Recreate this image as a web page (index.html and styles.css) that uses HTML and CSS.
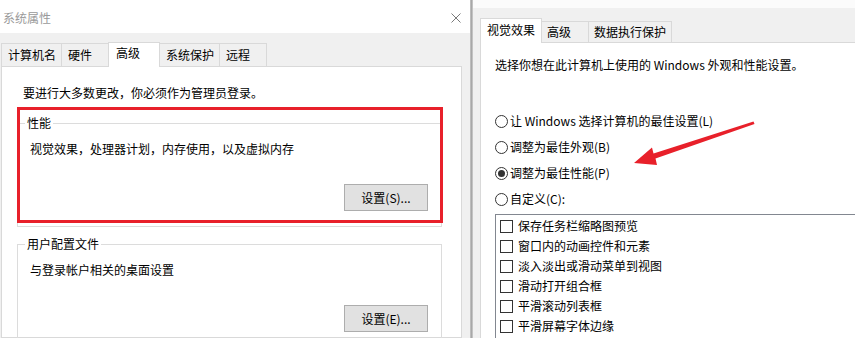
FILE: index.html
```html
<!DOCTYPE html>
<html lang="zh-CN">
<head>
<meta charset="utf-8">
<title>系统属性</title>
<link rel="stylesheet" href="styles.css">
</head>
<body>
<div class="screen">
  <section class="win win-left">
    <div class="strip"></div>
    <header class="titlebar">
      <span class="title">系统属性</span>
      <svg class="close" width="10" height="10" viewBox="0 0 10 10"><path d="M0.5 0.5 L9.5 9.5 M9.5 0.5 L0.5 9.5" stroke="#7a7a7a" stroke-width="1" fill="none"/></svg>
    </header>
    <div class="body">
      <nav class="tabs">
        <span class="tab">计算机名</span>
        <span class="tab">硬件</span>
        <span class="tab active">高级</span>
        <span class="tab">系统保护</span>
        <span class="tab">远程</span>
      </nav>
      <div class="panel">
        <p class="note">要进行大多数更改，你必须作为管理员登录。</p>
        <fieldset class="group">
          <legend>性能</legend>
          <p>视觉效果，处理器计划，内存使用，以及虚拟内存</p>
          <div class="actions"><button class="btn">设置(S)...</button></div>
        </fieldset>
        <fieldset class="group group-profile">
          <legend>用户配置文件</legend>
          <p>与登录帐户相关的桌面设置</p>
          <div class="actions"><button class="btn">设置(E)...</button></div>
        </fieldset>
        <div class="highlight"></div>
      </div>
    </div>
  </section>
  <div class="divider"></div>
  <section class="win win-right">
    <div class="strip-right"></div>
    <div class="body-right">
      <nav class="tabs tabs-right">
        <span class="tab active">视觉效果</span>
        <span class="tab">高级</span>
        <span class="tab">数据执行保护</span>
      </nav>
      <div class="panel panel-right">
        <p class="intro">选择你想在此计算机上使用的 Windows 外观和性能设置。</p>
        <div class="radios">
          <label class="radio"><span class="dot"></span>让 Windows 选择计算机的最佳设置(L)</label>
          <label class="radio"><span class="dot"></span>调整为最佳外观(B)</label>
          <label class="radio checked"><span class="dot"></span>调整为最佳性能(P)</label>
          <label class="radio"><span class="dot"></span>自定义(C):</label>
        </div>
        <ul class="checklist">
          <li><span class="box"></span>保存任务栏缩略图预览</li>
          <li><span class="box"></span>窗口内的动画控件和元素</li>
          <li><span class="box"></span>淡入淡出或滑动菜单到视图</li>
          <li><span class="box"></span>滑动打开组合框</li>
          <li><span class="box"></span>平滑滚动列表框</li>
          <li><span class="box"></span>平滑屏幕字体边缘</li>
        </ul>
      </div>
    </div>
  </section>
  <svg class="arrow" width="855" height="338" viewBox="0 0 855 338">
    <polygon points="634,163 657,165 655.5,158.5 754.5,124 753.5,121.5 653.5,153.5 652,147.5" fill="#e8202a"/>
  </svg>
</div>
</body>
</html>
```
FILE: styles.css
```css
* {
  box-sizing: border-box;
  margin: 0;
  padding: 0;
}

html, body {
  width: 855px;
  height: 338px;
  overflow: hidden;
  background: #fff;
}

body {
  font-family: "Noto Sans CJK SC", "Noto Sans", sans-serif;
  font-size: 12px;
  line-height: 16px;
  color: #000;
}

.screen {
  position: relative;
  display: flex;
  width: 855px;
  height: 338px;
  overflow: hidden;
}

.win {
  display: flex;
  flex-direction: column;
  flex: none;
  height: 338px;
  overflow: hidden;
}

.win-left {
  width: 470px;
}

.strip {
  flex: none;
  height: 3px;
  background: #fff;
}

.titlebar {
  flex: none;
  height: 30px;
  background: #fff;
  display: flex;
  align-items: center;
  justify-content: space-between;
  padding: 0 9px 0 3px;
  color: #9a9a9a;
}

.close {
  display: block;
}

.body {
  flex: 1;
  min-height: 0;
  display: flex;
  flex-direction: column;
  background: #f0f0f0;
  padding-top: 9px;
}

.tabs {
  flex: none;
  display: flex;
  align-items: flex-end;
  height: 24px;
  padding-left: 1px;
}

.tab {
  display: block;
  height: 23px;
  min-width: 48px;
  border: 1px solid #d9d9d9;
  border-bottom: none;
  margin-right: -1px;
  padding: 3px 5px 0 6px;
  white-space: nowrap;
  background: #f0f0f0;
}

.tab.active {
  position: relative;
  z-index: 1;
  height: 25px;
  min-width: 52px;
  margin-bottom: -1px;
  padding: 2px 5px 0 7px;
  background: #fff;
}

.panel {
  position: relative;
  flex: 1;
  min-height: 0;
  background: #fff;
  border: 1px solid #d9d9d9;
  margin: 0 8px 0 1px;
  padding: 18px 0 0 15px;
}

.note {
  margin-left: 6px;
}

.group {
  width: 425px;
  margin-top: 14px;
  border: 1px solid #dcdcdc;
  padding: 10px 13px 15px 12px;
  min-width: 0;
}

.group legend {
  margin-left: -5px;
  padding: 0 2px;
  line-height: 16px;
}

.group-profile {
  margin-top: 9px;
}

.actions {
  display: flex;
  justify-content: flex-end;
  margin-top: 27px;
}

.btn {
  width: 84px;
  height: 27px;
  background: #e1e1e1;
  border: 1px solid #adadad;
  font: inherit;
  color: #000;
  line-height: 16px;
}

.highlight {
  position: absolute;
  left: 15px;
  top: 40px;
  width: 426px;
  height: 116px;
  border: 3px solid #e8202a;
  pointer-events: none;
}

.divider {
  flex: none;
  width: 3px;
  background: linear-gradient(to right, #c8c8c8, #a8a8a8, #d0d0d0);
}

.win-right {
  width: 420px;
}

.strip-right {
  flex: none;
  height: 8px;
  background: #fbfbfb;
}

.body-right {
  flex: 1;
  min-height: 0;
  display: flex;
  flex-direction: column;
  background: #f0f0f0;
  padding-top: 10px;
}

.tabs-right {
  padding-left: 7px;
}

.tabs-right .tab {
  height: 21px;
  padding: 2px 5px 0 5px;
}

.tabs-right .tab.active {
  height: 25px;
  min-width: 62px;
  padding: 3px 6px 0 6px;
}

.panel-right {
  margin: 0;
  margin-left: 7px;
  border-right: none;
  border-bottom: none;
  padding: 14px 0 0 14px;
}

.radios {
  margin-top: 35px;
}

.radio {
  display: flex;
  align-items: center;
  gap: 2px;
  height: 26px;
}

.dot {
  flex: none;
  width: 13px;
  height: 13px;
  border: 1px solid #333;
  border-radius: 50%;
  background: #fff;
  display: flex;
  align-items: center;
  justify-content: center;
}

.radio.checked .dot::after {
  content: "";
  width: 7px;
  height: 7px;
  border-radius: 50%;
  background: #333;
}

.checklist {
  list-style: none;
  margin-top: 2px;
  border: 1px solid #828790;
  border-right: none;
  padding: 1px 0 0 4px;
  height: 200px;
}

.checklist li {
  display: flex;
  align-items: center;
  gap: 5px;
  height: 20px;
}

.box {
  flex: none;
  width: 13px;
  height: 13px;
  border: 1px solid #333;
  background: #fff;
}

.arrow {
  position: absolute;
  left: 0;
  top: 0;
  pointer-events: none;
}
```
